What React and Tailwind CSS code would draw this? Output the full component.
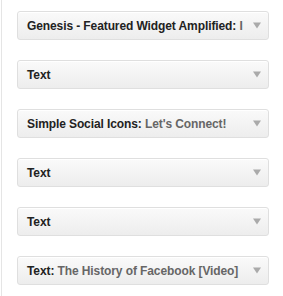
const widgets = [
  { name: 'Genesis - Featured Widget Amplified', title: 'I' },
  { name: 'Text' },
  { name: 'Simple Social Icons', title: "Let's Connect!" },
  { name: 'Text' },
  { name: 'Text' },
  { name: 'Text', title: 'The History of Facebook [Video]' },
];

const Widget = ({ name, title }) => (
  <div className="h-[29px] flex items-center rounded-[3px] border border-[#dfdfdf] bg-gradient-to-b from-[#fafafa] to-[#ededed] shadow-[inset_0_1px_0_#fff]">
    <div className="flex-1 min-w-0 pl-[9px] overflow-hidden whitespace-nowrap text-[12px] font-bold tracking-[-0.1px] text-[#222]">
      {name}
      {title && <>: <span className="text-[#666]">{title}</span></>}
    </div>
    <div className="w-[22px] shrink-0 flex justify-center">
      <svg width="8" height="7" viewBox="0 0 8 7">
        <path d="M0 0.5h8L4 6.5z" fill="#aaa" />
      </svg>
    </div>
  </div>
);

export default function App() {
  return (
    <div className="w-[283px] h-[296px] bg-white" style={{ fontFamily: '"Liberation Sans", Arial, sans-serif' }}>
      <div className="ml-px h-full border-l border-[#e5e5e5] pl-[15px] pr-[14px] pt-[11px] flex flex-col gap-[20px]">
        {widgets.map((w, i) => (
          <Widget key={i} {...w} />
        ))}
      </div>
    </div>
  );
}
